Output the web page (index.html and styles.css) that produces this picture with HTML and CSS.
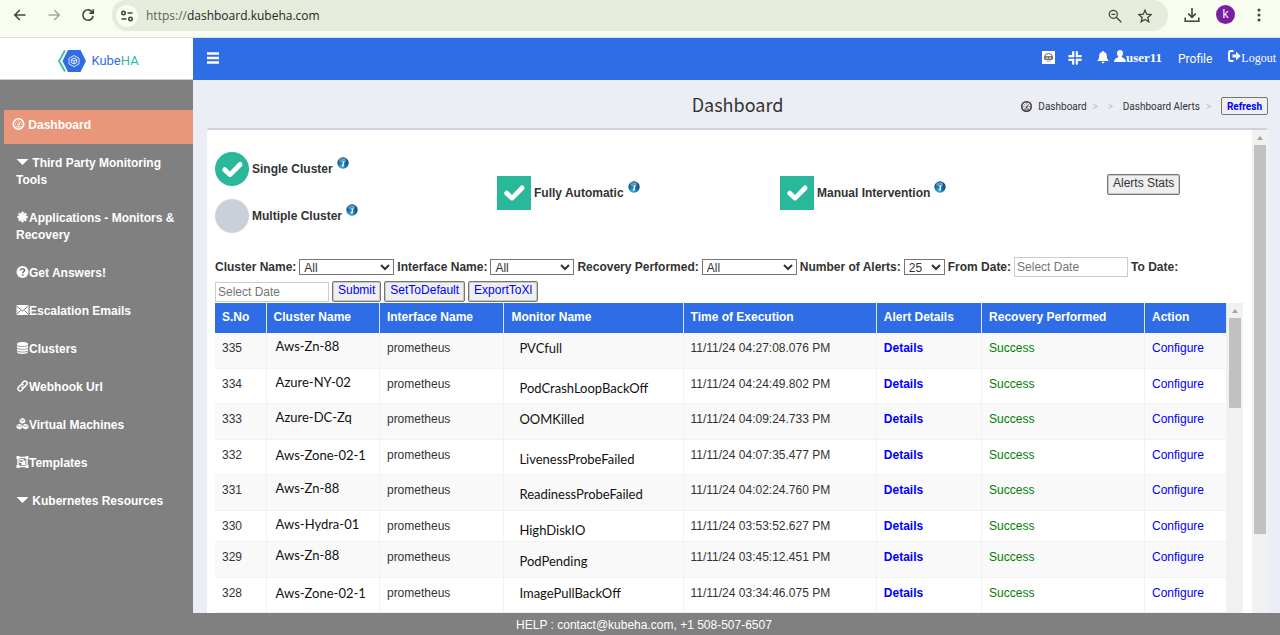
FILE: index.html
```html
<!DOCTYPE html>
<html lang="en">
<head>
  <meta charset="UTF-8" />
  <meta name="viewport" content="width=device-width, initial-scale=1.0" />
  <title>KubeHA Dashboard</title>
  <link rel="stylesheet" href="styles.css">
</head>
<body>
  <!-- Shared icons -->
  <svg class="sprite" aria-hidden="true">
    <defs>
      <radialGradient id="ball" cx="40%" cy="80%" r="80%">
        <stop offset="0" stop-color="#3cb4e8" />
        <stop offset="0.5" stop-color="#12699f" />
        <stop offset="1" stop-color="#0b3f70" />
      </radialGradient>
    </defs>
    <symbol id="i-info" viewBox="0 0 12 12">
      <circle cx="6" cy="6" r="5.7" fill="url(#ball)" />
      <ellipse cx="5.6" cy="3.2" rx="3.6" ry="2.2" fill="#9ed0ec" opacity="0.5" />
      <path d="M6.8 2.6h.4M5.4 5.2h1.4L5.8 8.9h1" fill="none" stroke="#fff" stroke-width="1.3" />
    </symbol>
    <symbol id="i-gauge" viewBox="0 0 12 12">
      <circle cx="6" cy="6" r="5.2" fill="none" stroke="currentColor" stroke-width="1.6" />
      <path d="M2.6 6h1M8.4 6h1M3.7 3.7l.6.6M6 2.6v1M8.3 3.7 6 6.6M3 8.8h6" fill="none" stroke="currentColor" />
      <circle cx="6" cy="6.6" r="1" fill="currentColor" />
    </symbol>
  </svg>

  <!-- Browser bar -->
  <div class="browser">
    <button class="nav-btn" type="button" aria-label="Back">
      <svg viewBox="0 0 14 14"><path d="M12.5 7H2M6.8 2 1.8 7l5 5" /></svg>
    </button>
    <button class="nav-btn off" type="button" aria-label="Forward">
      <svg viewBox="0 0 14 14"><path d="M1.5 7H12M7.2 2l5 5-5 5" /></svg>
    </button>
    <button class="nav-btn" type="button" aria-label="Reload">
      <svg viewBox="0 0 14 14"><path d="M11.6 4.4A5.2 5.2 0 1 0 12.2 8M12.3 1.2v3.9H8.4" /></svg>
    </button>
    <div class="url-bar">
      <span class="site-info">
        <svg viewBox="0 0 14 14"><circle cx="3.5" cy="4" r="1.7" /><path d="M7.5 4h5M1.5 10h5" /><circle cx="10.5" cy="10" r="1.7" /></svg>
      </span>
      <span class="url"><span>https://</span>dashboard.kubeha.com</span>
      <svg class="tool" viewBox="0 0 14 14"><circle cx="5.3" cy="5.3" r="4" /><path d="m8.3 8.3 5 5M3.5 5.3h3.6" /></svg>
      <svg class="tool" viewBox="0 0 14 14"><path d="m7 1.2 1.7 4 4.4.4-3.3 2.9 1 4.3L7 10.5l-3.8 2.3 1-4.3L.9 5.6l4.4-.4z" /></svg>
    </div>
    <svg class="download" viewBox="0 0 16 16"><path d="M8 1v9M4.2 6.6 8 10.4l3.8-3.8M1.2 10.5v3.8h13.6v-3.8" /></svg>
    <span class="avatar">k</span>
    <svg class="dots" viewBox="0 0 4 14"><circle cx="2" cy="2" r="1.5" /><circle cx="2" cy="7" r="1.5" /><circle cx="2" cy="12" r="1.5" /></svg>
  </div>

  <!-- Top header -->
  <header class="topbar">
    <a class="brand" href="#">
      <svg viewBox="0 0 30 24">
        <path d="M8 1.500 2 12l6 10.500" fill="none" stroke="#49c0a0" stroke-width="2" />
        <path d="M11 1h12.500l5.500 11-5.500 11H11L5.500 12z" fill="#2f6de6" />
        <path d="m17 6.500 5 2.800v5.600l-5 2.800-5-2.800V9.300z" fill="none" stroke="#dbe7ff" />
        <path d="m17 9 2.700 1.500v3L17 15l-2.700-1.500v-3zM14.300 10.500 17 12l2.700-1.500M17 12v3" fill="none" stroke="#fff" stroke-width=".9" />
      </svg>
      <span>Kube<b>HA</b></span>
    </a>
    <nav class="top-nav">
      <button class="burger" type="button" aria-label="Toggle menu"><svg viewBox="0 0 12 12"><path d="M0 1.500h12M0 6h12M0 10.500h12" /></svg></button>
      <svg class="bot" viewBox="0 0 13 13"><path d="M0 0h13v13H0z" fill="#fff" /><path d="M2.500 6a4 3.500 0 0 1 8 0" fill="none" stroke="#666" /><rect x="1.700" y="5" width="9.600" height="4" rx="2" fill="#777" /><path d="M4 7h2M7 7h2" stroke="#fff" /><path d="M4 10h5" stroke="#aaa" /></svg>
      <svg class="slack" viewBox="0 0 14 14"><path d="M5.200 1.200v4.300M1.300 5.200h1M8.800 1.200v.8M8.600 5.200h4.200M8.800 8.500v4.300M11.700 8.800h1M5.200 12v.8M1.300 8.800h4.200M8.800 2v3.200M5.200 8.800V12M2.300 5.200h3M8.800 8.800h3" /></svg>
      <svg class="bell" viewBox="0 0 12 13"><path d="M6 0c.7 0 1 .5 1 1 2 .5 2.800 2 2.800 4 0 2.600.8 3.800 2 5H.2c1.200-1.200 2-2.400 2-5 0-2 .8-3.500 2.800-4 0-.5.300-1 1-1zM4.600 10.800h2.800c0 2-2.800 2-2.800 0z" /></svg>
      <a class="user" href="#"><svg viewBox="0 0 12 12"><path d="M6 0c2 0 3 1.500 3 3.300 0 1.500-.7 2.700-1.500 3.400.2 1 4.500 1.300 4.500 5.300H0c0-4 4.300-4.300 4.500-5.300C3.700 6 3 4.800 3 3.300 3 1.500 4 0 6 0z" /></svg>user11</a>
      <a class="profile" href="#">Profile</a>
      <a class="logout" href="#"><svg viewBox="0 0 13 12"><path d="M5.500 1H3Q1 1 1 3v6q0 2 2 2h2.500" fill="none" stroke="#fff" stroke-width="2" /><path d="M4.500 4.500H8V1.600L12.700 6 8 10.400V7.500H4.500z" /></svg>Logout</a>
    </nav>
  </header>

  <div class="layout">
    <!-- Sidebar -->
    <aside class="sidebar">
      <a class="active" href="#"><svg class="ico"><use href="#i-gauge" /></svg> Dashboard</a>
      <a href="#"><svg class="ico" viewBox="0 0 12 12"><path d="M0 3h12L6 9z" /></svg> Third Party Monitoring Tools</a>
      <a href="#"><svg class="ico" viewBox="0 0 12 12"><path d="M6 .8v10.400M.8 6h10.400M2.400 2.400l7.200 7.200M9.600 2.400 2.400 9.600" stroke="#fff" stroke-width="2.400" /></svg>Applications - Monitors &amp; Recovery</a>
      <a href="#"><svg class="ico" viewBox="0 0 12 12"><circle cx="6" cy="6" r="6" /><path d="M4 4.600C4 2 8.200 2.200 8 4.500 7.900 5.700 6.200 5.800 6.200 7.200M6.200 8.200v1.600" fill="none" stroke="#777" stroke-width="1.600" /></svg>Get Answers!</a>
      <a href="#"><svg class="ico" viewBox="0 0 12 12"><path d="M0 1h12v10H0z" /><path d="m0 2 6 5 6-5M0 10.500l4-4M12 10.500l-4-4" fill="none" stroke="#777" /></svg>Escalation Emails</a>
      <a href="#"><svg class="ico" viewBox="0 0 12 12"><path d="M.5 2c0-2.600 11-2.600 11 0v8c0 2.600-11 2.600-11 0z" /><path d="M.5 3.200c1 1.800 10 1.800 11 0M.5 6c1 1.800 10 1.800 11 0M.5 8.700c1 1.800 10 1.800 11 0" fill="none" stroke="#808080" stroke-width=".8" /></svg>Clusters</a>
      <a href="#"><svg class="ico" viewBox="0 0 12 12"><path d="m5 4 2-2.200c1.800-1.800 4.800.6 3.200 2.700L8 7C7 8 5.500 7.700 5 6.600M7 8l-2 2.200c-1.800 1.800-4.800-.6-3.200-2.700L4 5c1-1 2.500-.7 3 .4" fill="none" stroke="#fff" stroke-width="1.500" /></svg>Webhook Url</a>
      <a href="#"><svg class="ico" viewBox="0 0 12 12"><path d="m6 0 2.800 1.300v3L6 5.700 3.200 4.300v-3zM3 5.700l2.800 1.300v3L3 11.500.1 10V7zM9 5.700 11.900 7v3L9 11.500 6.200 10V7z" /><path d="m3.800 1.800 2.200 1 2.200-1M.8 7.500l2.200 1 2.200-1M6.800 7.500l2.200 1 2.200-1" fill="none" stroke="#808080" stroke-width=".8" /></svg>Virtual Machines</a>
      <a href="#"><svg class="ico" viewBox="0 0 12 12"><path d="M1.500 1.500h9v9h-9z" fill="none" stroke="#fff" stroke-width="1.400" /><path d="M0 0h3v3H0zM9 0h3v3H9zM0 9h3v3H0zM9 9h3v3H9zM3 3h4v1.500h2V9H5V7H3z" /><path d="M4 4h2v2H4z" fill="#808080" /></svg>Templates</a>
      <a href="#"><svg class="ico" viewBox="0 0 12 12"><path d="M0 3h12L6 9z" /></svg> Kubernetes Resources</a>
    </aside>

    <main class="content">
      <div class="page-head">
        <h1>Dashboard</h1>
        <div class="crumbs">
          <svg><use href="#i-gauge" /></svg>
          <a href="#">Dashboard</a>
          <i>&gt;</i>
          <i>&gt;</i>
          <a href="#">Dashboard Alerts</a>
          <i>&gt;</i>
          <button class="refresh" type="button">Refresh</button>
        </div>
      </div>

      <section class="panel">
        <div class="panel-body">
          <!-- Mode options -->
          <div class="modes">
            <div class="mode-group">
              <label class="mode"><input type="radio" name="cluster" checked /><span>Single Cluster</span><svg><use href="#i-info" /></svg></label>
              <label class="mode"><input type="radio" name="cluster" /><span>Multiple Cluster</span><svg><use href="#i-info" /></svg></label>
            </div>
            <label class="mode"><input type="checkbox" checked /><span>Fully Automatic</span><svg><use href="#i-info" /></svg></label>
            <label class="mode"><input type="checkbox" checked /><span>Manual Intervention</span><svg><use href="#i-info" /></svg></label>
            <button class="btn stats" type="button">Alerts Stats</button>
          </div>

          <!-- Filters -->
          <form class="filters">
            <label for="clusterName">Cluster Name:</label>
            <select id="clusterName" class="w-lg"><option>All</option></select>
            <label for="interfaceName">Interface Name:</label>
            <select id="interfaceName" class="w-md"><option>All</option></select>
            <label for="recovery">Recovery Performed:</label>
            <select id="recovery" class="w-lg"><option>All</option></select>
            <label for="alertCount">Number of Alerts:</label>
            <select id="alertCount" class="w-sm"><option>25</option></select>
            <label for="fromDate">From Date:</label>
            <input type="text" id="fromDate" placeholder="Select Date" />
            <label for="toDate">To Date:</label>
            <input type="text" id="toDate" placeholder="Select Date" />
            <button class="btn" type="button">Submit</button>
            <button class="btn" type="button">SetToDefault</button>
            <button class="btn" type="button">ExportToXl</button>
          </form>

          <!-- Alerts table -->
          <div class="table-wrap">
            <table>
              <colgroup>
                <col class="c-no" /><col class="c-cluster" /><col class="c-interface" /><col class="c-monitor" />
                <col class="c-time" /><col class="c-details" /><col class="c-recovery" /><col class="c-action" />
              </colgroup>
              <thead>
                <tr><th>S.No</th><th>Cluster Name</th><th>Interface Name</th><th>Monitor Name</th><th>Time of Execution</th><th>Alert Details</th><th>Recovery Performed</th><th>Action</th></tr>
              </thead>
              <tbody>
                <tr><td>335</td><td class="name">Aws-Zn-88</td><td>prometheus</td><td class="name monitor">PVCfull</td><td>11/11/24 04:27:08.076 PM</td><td><a class="details" href="#">Details</a></td><td class="ok">Success</td><td><a href="#">Configure</a></td></tr>
                <tr><td>334</td><td class="name">Azure-NY-02</td><td>prometheus</td><td class="name monitor low">PodCrashLoopBackOff</td><td>11/11/24 04:24:49.802 PM</td><td><a class="details" href="#">Details</a></td><td class="ok">Success</td><td><a href="#">Configure</a></td></tr>
                <tr><td>333</td><td class="name">Azure-DC-Zq</td><td>prometheus</td><td class="name monitor">OOMKilled</td><td>11/11/24 04:09:24.733 PM</td><td><a class="details" href="#">Details</a></td><td class="ok">Success</td><td><a href="#">Configure</a></td></tr>
                <tr><td>332</td><td class="name mid">Aws-Zone-02-1</td><td>prometheus</td><td class="name monitor low">LivenessProbeFailed</td><td>11/11/24 04:07:35.477 PM</td><td><a class="details" href="#">Details</a></td><td class="ok">Success</td><td><a href="#">Configure</a></td></tr>
                <tr><td>331</td><td class="name">Aws-Zn-88</td><td>prometheus</td><td class="name monitor low">ReadinessProbeFailed</td><td>11/11/24 04:02:24.760 PM</td><td><a class="details" href="#">Details</a></td><td class="ok">Success</td><td><a href="#">Configure</a></td></tr>
                <tr class="short"><td>330</td><td class="name">Aws-Hydra-01</td><td>prometheus</td><td class="name monitor low">HighDiskIO</td><td>11/11/24 03:53:52.627 PM</td><td><a class="details" href="#">Details</a></td><td class="ok">Success</td><td><a href="#">Configure</a></td></tr>
                <tr><td>329</td><td class="name">Aws-Zn-88</td><td>prometheus</td><td class="name monitor low">PodPending</td><td>11/11/24 03:45:12.451 PM</td><td><a class="details" href="#">Details</a></td><td class="ok">Success</td><td><a href="#">Configure</a></td></tr>
                <tr><td>328</td><td class="name mid">Aws-Zone-02-1</td><td>prometheus</td><td class="name monitor">ImagePullBackOff</td><td>11/11/24 03:34:46.075 PM</td><td><a class="details" href="#">Details</a></td><td class="ok">Success</td><td><a href="#">Configure</a></td></tr>
              </tbody>
            </table>
            <div class="scroll"><span class="thumb inner"></span></div>
          </div>
        </div>
        <div class="scroll"><span class="thumb outer"></span></div>
      </section>
    </main>
  </div>

  <footer>HELP : contact@kubeha.com, +1 508-507-6507</footer>
</body>
</html>
```
FILE: styles.css
```css
* {
  box-sizing: border-box;
}
body {
  margin: 0;
  height: 100vh;
  display: flex;
  flex-direction: column;
  overflow: hidden;
  background: #ebeef4;
  color: #333;
  font-family: "Liberation Sans", Arial, sans-serif;
  font-size: 12px;
}
a {
  color: inherit;
  text-decoration: none;
}
button {
  font-family: inherit;
  cursor: pointer;
}
.sprite {
  position: absolute;
  width: 0;
  height: 0;
}

/* Browser bar */
.browser {
  flex: none;
  height: 38px;
  display: flex;
  align-items: flex-start;
  background: #f9fcf1;
  border-bottom: 1px solid #dfe3d8;
  padding: 0 19px 0 6px;
}
.browser svg {
  fill: none;
  stroke: #3c4a38;
  stroke-width: 1.6;
}
.nav-btn {
  width: 28px;
  height: 30px;
  margin-right: 6px;
  padding: 0;
  border: none;
  background: none;
  display: flex;
  align-items: center;
  justify-content: center;
}
.nav-btn svg {
  width: 14px;
  height: 14px;
}
.nav-btn.off {
  opacity: 0.45;
}
.url-bar {
  flex: 1;
  height: 31px;
  margin-left: 4px;
  padding: 0 16px 0 4px;
  display: flex;
  align-items: center;
  gap: 16px;
  background: #e5ecdc;
  border-radius: 14px 16px 16px 16px;
}
.site-info {
  width: 22px;
  height: 22px;
  border-radius: 50%;
  background: #f9fcf1;
  display: flex;
  align-items: center;
  justify-content: center;
}
.site-info svg,
.tool {
  width: 14px;
  height: 14px;
}
.browser .tool {
  stroke-width: 1.3;
}
.url {
  flex: 1;
  margin-left: -8px;
  font: 12px "Open Sans", sans-serif;
  color: #22271f;
}
.url span {
  color: #5c6457;
}
.download {
  width: 16px;
  height: 16px;
  margin: 7px 16px 0;
}
.avatar {
  width: 19px;
  height: 19px;
  margin: 5px 22px 0 0;
  border-radius: 50%;
  background: #7b1fa2;
  color: #fff;
  font-size: 12px;
  line-height: 19px;
  text-align: center;
}
.browser .dots {
  width: 4px;
  height: 14px;
  margin-top: 8px;
  fill: #3c4a38;
  stroke: none;
}

/* Header */
.topbar {
  flex: none;
  height: 42px;
  display: flex;
}
.brand {
  width: 193px;
  flex: none;
  display: flex;
  align-items: center;
  justify-content: center;
  gap: 4px;
  padding: 4px 0 0 3px;
  background: #fff;
  border-bottom: 1px solid #ccc;
  color: #2f6de6;
  font: 13px Roboto, sans-serif;
}
.brand svg {
  width: 30px;
  height: 24px;
}
.brand b {
  color: #2cb99b;
  font-weight: 400;
}
.top-nav {
  flex: 1;
  display: flex;
  align-items: center;
  padding: 0 4px 3px 14px;
  background: #2f6de6;
  color: #fff;
  fill: #fff;
}
.burger {
  margin-right: auto;
  padding: 0;
  border: none;
  background: none;
}
.burger svg {
  display: block;
  width: 12px;
  height: 12px;
  stroke: #fff;
  stroke-width: 2.5;
}
.bot {
  width: 13px;
  height: 13px;
}
.slack {
  width: 14px;
  height: 14px;
  margin: 0 15px 0 13px;
  fill: none;
  stroke: #fff;
  stroke-width: 2.2;
  stroke-linecap: round;
}
.bell {
  width: 12px;
  height: 13px;
  margin-right: 5px;
}
.user {
  font: bold 13px "Liberation Serif", serif;
}
.logout {
  font: 12px "Liberation Serif", serif;
}
.user svg {
  width: 12px;
  height: 12px;
}
.logout svg {
  width: 13px;
  height: 12px;
}
.profile {
  margin: 3px 16px 0;
  font: 12px Roboto, sans-serif;
}

/* Sidebar */
.layout {
  flex: 1;
  min-height: 0;
  display: flex;
}
.sidebar {
  width: 193px;
  flex: none;
  padding: 30px 0 0 4px;
  background: #808080;
  color: #fff;
  font-weight: bold;
}
.sidebar a {
  display: block;
  padding: 0 12px 21px;
  line-height: 17px;
}
.sidebar .active {
  height: 34px;
  margin-bottom: 11px;
  padding: 7px 8px;
  background: #e9967a;
}
.ico {
  width: 13px;
  height: 12px;
  fill: #fff;
  vertical-align: -1px;
}

/* Page head */
.content {
  flex: 1;
  min-width: 0;
  display: flex;
  flex-direction: column;
  padding: 0 12px 0 14px;
}
.page-head {
  height: 48px;
  flex: none;
  display: grid;
  grid-template-columns: 1fr auto 1fr;
  align-items: center;
}
.page-head h1 {
  grid-column: 2;
  margin: 0;
  font: 18px "Noto Sans CJK SC", sans-serif;
}
.crumbs {
  display: flex;
  align-items: center;
  justify-content: flex-end;
  gap: 6px;
  padding-top: 4px;
  font: 10px Roboto, sans-serif;
}
.crumbs svg {
  width: 11px;
  height: 11px;
}
.crumbs i {
  width: 9px;
  color: #bbb;
  font-style: normal;
}
.refresh {
  height: 18px;
  padding: 0 5px;
  border: 1px solid #767676;
  border-radius: 2px;
  background: #efefef;
  color: #00f;
  font-size: 10px;
  font-weight: bold;
}

/* Panel */
.panel {
  flex: 1;
  min-height: 0;
  display: flex;
  background: #fff;
  border-top: 2px solid #cdd2de;
  border-radius: 3px 3px 0 0;
}
.panel-body {
  flex: 1;
  min-width: 0;
  padding: 22px 9px 0 8px;
}
.modes {
  display: grid;
  grid-template-columns: 282fr 283fr 327fr 136fr;
  align-items: center;
  margin-bottom: 24px;
}
.mode-group {
  display: grid;
  gap: 13px;
}
.mode {
  display: flex;
  align-items: center;
  gap: 3px;
  font-weight: bold;
}
.mode svg {
  width: 12px;
  height: 12px;
  margin: 0 0 12px 1px;
}
.mode input {
  appearance: none;
  width: 34px;
  height: 34px;
  margin: 0;
  display: grid;
  place-items: center;
  background: #cad0d9;
}
.mode input[type="radio"] {
  border-radius: 50%;
}
.mode input:checked {
  background: #2ab89b;
}
.mode input:checked::before {
  content: "";
  width: 22px;
  height: 17px;
  background: #fff;
  clip-path: path("M2 7.500Q3.500 5.500 5.500 7.500L9 11 17.500 2Q19.500.5 21 2.500 22 4 21 5.500L10.500 16Q9 17 7.500 16L1.500 10.500Q.5 9 2 7.500Z");
}
.btn {
  height: 21px;
  padding: 0 5px 3px;
  border: 1px solid #767676;
  border-radius: 2px;
  box-shadow: inset 0 0 0 1px #c8c8c8;
  background: #efefef;
  color: #00f;
  font-size: 12px;
}
.stats {
  justify-self: start;
  margin-bottom: 16px;
  color: #333;
}

/* Filters */
.filters {
  display: flex;
  flex-wrap: wrap;
  align-items: center;
  gap: 4px 3px;
}
.filters label {
  font-weight: bold;
}
.filters select {
  height: 16px;
  padding: 0;
  border: 1px solid #767676;
  border-radius: 0;
  background: #fff;
  color: #333;
  font: 12px "Liberation Sans", Arial, sans-serif;
}
.w-lg {
  width: 95px;
}
.w-md {
  width: 84px;
}
.w-sm {
  width: 41px;
}
.filters input {
  width: 114px;
  height: 20px;
  padding: 0 2px;
  border: 1px solid #ccc;
  font: 12px "Liberation Sans", Arial, sans-serif;
}
.filters input::placeholder {
  color: #757575;
}

/* Table */
.table-wrap {
  display: flex;
  align-items: stretch;
  margin-top: 1px;
}
table {
  flex: 1;
  min-width: 0;
  table-layout: fixed;
  border-collapse: separate;
  border-spacing: 0;
}
.c-no { width: 5.1%; }
.c-cluster { width: 11.2%; }
.c-interface { width: 12.3%; }
.c-monitor { width: 17.7%; }
.c-time { width: 19.1%; }
.c-details { width: 10.4%; }
.c-recovery { width: 16.1%; }
.c-action { width: 8.1%; }
th {
  height: 30px;
  padding: 0 7px 2px;
  background: #2f6de6;
  border-right: 1px solid #dfe6f5;
  color: #fff;
  text-align: left;
}
td {
  height: 35px;
  padding: 8px 7px 0;
  border-right: 1px solid #f2f2f2;
  border-bottom: 1px solid #f2f2f2;
  line-height: 14px;
  vertical-align: top;
  white-space: nowrap;
}
tr:nth-child(odd) td {
  height: 36px;
  background: #f9f9f9;
}
.short td {
  height: 31px;
}
td a {
  color: #00f;
}
.details {
  font-weight: bold;
}
.ok {
  color: #008000;
}
.name {
  padding-top: 6px;
  padding-left: 9px;
  color: #111;
  font: 13px/14px Lato, sans-serif;
}
.mid {
  padding-top: 8px;
}
.monitor {
  padding-top: 8px;
  padding-left: 15px;
}
.low {
  padding-top: 12px;
}

/* Scrollbars */
.scroll {
  width: 16px;
  flex: none;
  padding: 6px 2px 0;
  background: #f1f1f1;
}
.scroll::before {
  content: "";
  display: block;
  width: 0;
  margin: 0 auto 5px;
  border: 3px solid transparent;
  border-top: none;
  border-bottom: 4px solid #a3a3a3;
}
.thumb {
  display: block;
  background: #c1c1c1;
}
.inner {
  height: 90px;
}
.outer {
  height: 389px;
}

footer {
  flex: none;
  height: 22px;
  padding-left: 8px;
  background: #808080;
  color: #fff;
  line-height: 24px;
  text-align: center;
}
```
